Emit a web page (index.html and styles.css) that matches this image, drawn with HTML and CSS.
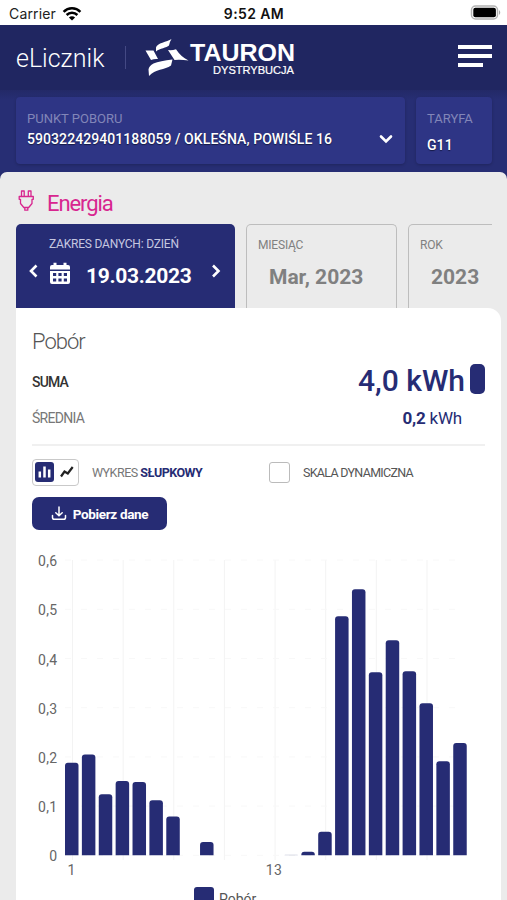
FILE: index.html
```
<!DOCTYPE html>
<html lang="pl">
<head>
    <meta charset="utf-8">
    <title>eLicznik - TAURON Dystrybucja</title>
    <link rel="stylesheet" href="styles.css">
</head>
<body>
    <div class="status-bar">
        <div class="carrier">
            <span class="carrier-name">Carrier</span>
            <svg width="20" height="16" viewBox="0 0 20 16" fill="none" stroke="#000" stroke-width="2.5">
                <path d="M1.6 5.8a12 12 0 0 1 16.8 0M4.6 9a7.7 7.7 0 0 1 10.8 0"/>
                <path d="M10 14.6L6.9 11.5a4.4 4.4 0 0 1 6.2 0z" fill="#000" stroke="none"/>
            </svg>
        </div>
        <span class="clock">9:52 AM</span>
        <svg class="battery" width="32" height="16" viewBox="0 0 32 16">
            <rect x="1.5" y="1" width="26" height="13" rx="4" fill="#fff" stroke="#b3b3b3" stroke-width="1.5"/>
            <rect x="3.3" y="2.8" width="22.6" height="9.4" rx="2" fill="#000"/>
            <path d="M29.2 5v5q2-2.5 0-5z" fill="#999"/>
        </svg>
    </div>

    <header class="header">
        <span class="brand">eLicznik</span>
        <span class="brand-line"></span>
        <svg class="logo" width="152" height="42" viewBox="0 0 152 42" fill="#fff">
            <path d="M27.500 2C23 5 13 6 12 10.500L12 14.500C16 11 22.500 11 25 8.500Q25.500 5 27.500 2Z"/>
            <path d="M1.500 13.500H9.500L14 22Q10.500 21.500 7 23Z"/>
            <path d="M24 13Q28 13.500 32 12.300Q37 20 44.500 23.500Q37 22.500 30.500 23Z"/>
            <path d="M28.500 22.500L27 28.500C21 33 11 32 5 39L4.500 32.500Q5 29 9.500 26.500Q16 24 28.500 22.500Z"/>
            <text class="logo-name" x="46" y="23.500" textLength="105" lengthAdjust="spacingAndGlyphs">TAURON</text>
            <text class="logo-sub" x="69" y="37" textLength="81" lengthAdjust="spacingAndGlyphs">DYSTRYBUCJA</text>
        </svg>
        <button class="menu" aria-label="Menu">
            <span></span>
            <span></span>
            <span class="short"></span>
        </button>
    </header>

    <section class="meter">
        <div class="meter-box meter-point">
            <div>
                <p class="meter-label">PUNKT POBORU</p>
                <p class="meter-value">590322429401188059 / OKLEŚNA, POWIŚLE 16</p>
            </div>
            <svg width="16" height="12" viewBox="0 0 16 12" fill="none" stroke="#fff" stroke-width="2.6" stroke-linecap="round"><path d="M3 3.500l5 5 5-5"/></svg>
        </div>
        <div class="meter-box meter-tariff">
            <p class="meter-label">TARYFA</p>
            <p class="meter-value">G11</p>
        </div>
    </section>

    <main class="content">
        <h1 class="energy">
            <svg width="17" height="23" viewBox="0 0 17 23" fill="none" stroke="#d8268f" stroke-width="1.300" stroke-linejoin="round">
                <path d="M3.500 7.500V2h2.700v5.500M10.300 7.500V2H13v5.500"/>
                <path d="M1.200 7.500h14.100v2.800h-1.300v4.200l-3.300 4H5.800l-3.300-4v-4.200H1.200z"/>
                <path d="M6.800 18.500v2.700h3v-2.700"/>
            </svg>
            <span>Energia</span>
        </h1>

        <nav class="tabs">
            <div class="tab active">
                <p class="tab-label">ZAKRES DANYCH: DZIEŃ</p>
                <div class="tab-row">
                    <svg class="prev" width="14" height="16" viewBox="0 0 14 16"><path d="M9.500 2.500L4 8l5.500 5.500"/></svg>
                    <svg class="calendar" width="20" height="23" viewBox="0 0 20 23">
                        <path fill="#fff" d="M3.500 3V.8h3V3h7V.8h3V3H18a2 2 0 0 1 2 2v2.500H0V5a2 2 0 0 1 2-2zM0 9h20v11a2 2 0 0 1-2 2H2a2 2 0 0 1-2-2z"/>
                        <path fill="#262c74" d="M3 11h3.200v3H3zM8.400 11h3.200v3H8.400zM13.800 11H17v3h-3.200zM3 16.500h3.200v3H3zM8.400 16.500h3.200v3H8.400zM13.800 16.500H17v3h-3.200z"/>
                    </svg>
                    <span class="tab-value">19.03.2023</span>
                    <svg class="next" width="14" height="16" viewBox="0 0 14 16"><path d="M4 2.500L9.500 8 4 13.500"/></svg>
                </div>
            </div>
            <div class="tab month">
                <p class="tab-label">MIESIĄC</p>
                <p class="tab-value">Mar, 2023</p>
            </div>
            <div class="tab year">
                <p class="tab-label">ROK</p>
                <p class="tab-value">2023</p>
            </div>
        </nav>

        <div class="card">
            <h2 class="card-title"><span>Pobór</span></h2>
            <div class="row sum">
                <span class="row-label">SUMA</span>
                <span class="row-value">4,0 kWh</span>
                <span class="marker"></span>
            </div>
            <div class="row average">
                <span class="row-label">ŚREDNIA</span>
                <span class="row-value"><b>0,2</b> kWh</span>
            </div>

            <div class="options">
                <div class="switch">
                    <svg width="19" height="20" viewBox="0 0 19 20">
                        <rect width="19" height="20" rx="3" fill="#262c74"/>
                        <path d="M4.800 9.500v6M9.500 4.500v11M14.200 7.500v8" stroke="#fff" stroke-width="2.500"/>
                    </svg>
                    <svg width="14" height="12" viewBox="0 0 14 12" fill="none" stroke="#222" stroke-width="2.200"><path d="M1 10.500l3.500-5 3.300 2L12.700 1"/></svg>
                </div>
                <span class="chart-type">WYKRES <b>SŁUPKOWY</b></span>
                <span class="checkbox"></span>
                <span class="scale">SKALA DYNAMICZNA</span>
            </div>

            <button class="download">
                <svg width="16" height="15" viewBox="0 0 16 15" fill="none" stroke="#fff" stroke-width="1.500" stroke-linecap="round">
                    <path d="M8 1v8.500M4.800 6.800L8 9.800l3.200-3M1.500 9.500v2q0 1.800 1.800 1.800h9.400q1.800 0 1.800-1.800v-2"/>
                </svg>
                <span>Pobierz dane</span>
            </button>

            <svg class="chart" id="chart" width="453" height="335" viewBox="32 545 453 335"></svg>
            <div class="legend">
                <span class="legend-color"></span>
                <span class="legend-text">Pobór</span>
            </div>
        </div>
    </main>
    <script src="chart.js"></script>
</body>
</html>
```
FILE: styles.css
```
* {
    box-sizing: border-box;
}

body {
    margin: 0;
    height: 900px;
    overflow: hidden;
    background-color: #262c70;
    font-family: Roboto, "Open Sans", sans-serif;
    color: #555;
}

p, h1, h2 {
    margin: 0;
    font-weight: normal;
}

span, p {
    white-space: nowrap;
}

svg {
    display: block;
    flex-shrink: 0;
}

button {
    border: none;
    padding: 0;
    font-family: inherit;
}

/* Phone status bar */
.status-bar {
    display: grid;
    grid-template-columns: 1fr auto 1fr;
    align-items: center;
    height: 25px;
    padding: 2px 5px 0 9px;
    background-color: #fff;
    font-family: Inter, sans-serif;
    font-size: 14px;
    color: #222;
}

.carrier {
    display: flex;
    align-items: center;
    gap: 6px;
}

.carrier-name {
    letter-spacing: 0.15px;
}

.clock {
    margin-right: 3px;
    font-weight: 600;
    letter-spacing: 0.4px;
    color: #111;
}

.battery {
    justify-self: end;
    margin-top: -2px;
}

/* Header */
.header {
    display: flex;
    align-items: center;
    height: 65px;
    padding: 0 15px 0 16px;
    background-color: #202661;
    color: #fff;
}

.brand {
    width: 109px;
    font-size: 25px;
    font-weight: 300;
    padding-top: 2px;
}

.brand-line {
    width: 1px;
    height: 23px;
    margin-right: 18px;
    background-color: #444984;
}

.logo-name {
    font-family: "Liberation Sans", sans-serif;
    font-size: 23px;
    font-weight: bold;
}

.logo-sub {
    font-family: "Liberation Sans", sans-serif;
    font-size: 10.5px;
    stroke: #fff;
    stroke-width: 0.2px;
}

.menu {
    display: flex;
    flex-direction: column;
    gap: 5px;
    width: 34px;
    margin: -4px 0 0 auto;
    background: none;
}

.menu span {
    width: 34px;
    height: 4px;
    background-color: #fff;
}

.menu .short {
    width: 25px;
}

/* Meter point */
.meter {
    display: flex;
    gap: 11px;
    height: 82px;
    padding: 7px 15px 8px 16px;
    background: linear-gradient(#232967, #272e74 10px);
}

.meter-box {
    height: 67px;
    padding: 14px 11px 0;
    border-radius: 4px;
    background-color: #2e3585;
    box-shadow: 0 1px 3px rgba(0, 0, 0, 0.2);
}

.meter-point {
    display: flex;
    justify-content: space-between;
    width: 389px;
}

.meter-point svg {
    margin-top: 22px;
}

.meter-tariff {
    width: 76px;
}

.meter-label {
    font-size: 13px;
    line-height: 16px;
    color: #8286b8;
}

.meter-value {
    margin-top: 4px;
    font-size: 14px;
    line-height: 17px;
    font-weight: 500;
    letter-spacing: 0.07px;
    color: #fff;
    text-shadow: 0 1px 1px #151944;
}

.meter-tariff .meter-value {
    margin-top: 10px;
}

/* Content */
.content {
    height: 728px;
    padding-left: 16px;
    border-radius: 7px 7px 0 0;
    background-color: #ebebeb;
}

.energy {
    display: flex;
    align-items: center;
    gap: 12px;
    height: 52px;
    padding: 11px 0 0 2px;
    font-size: 22px;
    letter-spacing: -1.1px;
    color: #d8268f;
}

.energy svg {
    margin-top: -6px;
}

.tabs {
    display: flex;
    gap: 11px;
    height: 84px;
    width: 476px;
    overflow: hidden;
}

.tab {
    flex-shrink: 0;
    width: 151px;
    padding: 12px 12px 0 11px;
    border: 1px solid #bdbdbd;
    border-bottom: none;
    border-radius: 5px 5px 0 0;
    color: #808080;
}

.tab-label {
    font-size: 12px;
    line-height: 16px;
    letter-spacing: -0.2px;
}

.tab-value {
    display: block;
    font-size: 21px;
    line-height: 26px;
    font-weight: bold;
}

.month .tab-value {
    padding: 11px 0 0 11px;
}

.year .tab-value {
    padding: 11px 0 0 11px;
}

.active {
    width: 219px;
    border: none;
    background-color: #262c74;
    color: #fff;
}

.active .tab-label {
    padding-left: 22px;
    color: #c5c7e0;
}

.active .tab-value {
    letter-spacing: -0.3px;
}

.tab-row {
    display: flex;
    align-items: center;
    height: 48px;
}

.prev, .next {
    margin-bottom: 11px;
    fill: none;
    stroke: #fff;
    stroke-width: 2.6px;
}

.calendar {
    margin: -5px 16px 0 9px;
}

.next {
    margin-left: auto;
}

/* Card */
.card {
    width: 485px;
    height: 592px;
    padding: 0 16px;
    border-radius: 0 13px 0 0;
    background-color: #fff;
}

.card-title {
    padding-top: 20px;
    font-size: 22px;
    line-height: 28px;
    font-weight: 300;
    letter-spacing: -1px;
}

.row {
    display: flex;
    align-items: center;
}

.row-label {
    flex: 1;
    font-size: 14px;
}

.row-value {
    color: #262c74;
}

.sum {
    height: 46px;
}

.sum .row-label {
    padding-top: 5px;
    font-weight: 500;
    letter-spacing: -0.8px;
    color: #333;
}

.sum .row-value {
    padding-top: 2px;
    font-size: 30px;
    font-weight: 500;
}

.marker {
    width: 15px;
    height: 30px;
    margin-left: 5px;
    border-radius: 5px;
    background-color: #262c74;
}

.average {
    align-items: flex-start;
    height: 44px;
    padding: 6px 23px 0 0;
    border-bottom: 2px solid #f0f0f0;
}

.average .row-label {
    line-height: 20px;
    letter-spacing: -0.7px;
    color: #777;
}

.average .row-value {
    font-size: 17px;
    line-height: 20px;
    letter-spacing: -0.2px;
}

.options {
    display: flex;
    align-items: center;
    height: 51px;
    padding-top: 1px;
}

.switch {
    display: flex;
    align-items: center;
    gap: 6px;
    width: 47px;
    height: 27px;
    padding-left: 2px;
    border: 1px solid #c9c9c9;
    border-radius: 4px;
}

.chart-type {
    width: 177px;
    margin-left: 13px;
    font-size: 12.5px;
    letter-spacing: -0.5px;
    color: #777;
}

.chart-type b {
    color: #262c74;
}

.checkbox {
    width: 21px;
    height: 21px;
    margin-right: 13px;
    border: 1px solid #bbb;
    border-radius: 3px;
}

.scale {
    font-size: 12.5px;
    letter-spacing: -0.7px;
}

.download {
    display: flex;
    align-items: center;
    justify-content: center;
    gap: 6px;
    width: 135px;
    height: 33px;
    border-radius: 7px;
    background-color: #262c74;
    color: #fff;
    font-size: 13.5px;
    font-weight: bold;
    letter-spacing: -0.35px;
}

/* Chart */
.chart {
    margin-top: 15px;
}

.chart text {
    font-size: 14px;
    letter-spacing: 0.3px;
    fill: #666;
}

.chart .bar {
    fill: #262c74;
}

.chart .grid {
    stroke: #f3f3f3;
}

.chart .dashed {
    stroke: #f8f8f8;
    stroke-dasharray: 6 10;
}

.legend {
    display: flex;
    gap: 5px;
    padding: 7px 0 0 162px;
    font-size: 14px;
}

.legend-color {
    width: 20px;
    height: 20px;
    border-radius: 3px;
    background-color: #262c74;
}

.legend-text {
    line-height: 24px;
}
```
FILE: chart.js
```
const chart = document.getElementById('chart');
const usage = [0.188, 0.205, 0.124, 0.151, 0.149, 0.112, 0.079, 0, 0.027, 0, 0, 0,
    0, 0.001, 0.007, 0.048, 0.486, 0.541, 0.372, 0.437, 0.374, 0.309, 0.191, 0.228];
const left = 65;
const bottom = 855.3;
const step = 16.88;
const unit = 492;

function draw(name, attrs, text) {
    const el = document.createElementNS('http://www.w3.org/2000/svg', name);
    for (const key of Object.keys(attrs)) {
        el.setAttribute(key, attrs[key]);
    }
    if (text) el.textContent = text;
    chart.appendChild(el);
}

// Grid and axis labels
for (let i = 0; i < 8; i++) {
    const x = left + 7.5 + i * step * 3;
    draw('line', { x1: x, x2: x, y1: 560, y2: 860, class: 'grid' });
}
for (let i = 0; i <= 6; i++) {
    const y = bottom - i * unit / 10;
    draw('line', { x1: left, x2: 460, y1: y, y2: y, class: 'dashed' });
    draw('text', { x: 57.5, y: y + 6, 'text-anchor': 'end' }, i ? '0,' + i : '0');
}
draw('text', { x: 71.5, y: 874.5, 'text-anchor': 'middle' }, '1');
draw('text', { x: 274, y: 874.5, 'text-anchor': 'middle' }, '13');

// Bars with rounded top corners
usage.forEach((value, i) => {
    if (!value) return;
    const h = value * unit;
    const r = Math.min(3, h);
    const x = left + i * step;
    draw('path', {
        d: `M${x} ${bottom}v${r - h}q0 ${-r} ${r} ${-r}h${13.5 - 2 * r}q${r} 0 ${r} ${r}v${h - r}z`,
        class: 'bar',
        opacity: value < 0.002 ? 0.3 : 1
    });
});
```
